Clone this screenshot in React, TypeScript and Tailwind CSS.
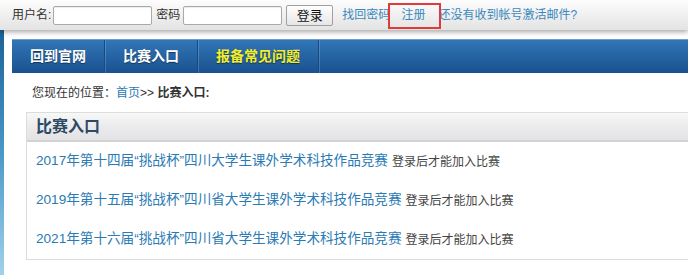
import React from "react"

const rows = [
  "2017年第十四届“挑战杯”四川大学生课外学术科技作品竞赛",
  "2019年第十五届“挑战杯”四川省大学生课外学术科技作品竞赛",
  "2021年第十六届“挑战杯”四川省大学生课外学术科技作品竞赛",
]

const navItems = [
  { label: "回到官网", active: false },
  { label: "比赛入口", active: false },
  { label: "报备常见问题", active: true },
]

export default function App() {
  return (
    <div className="relative w-[688px] h-[275px] overflow-hidden bg-white font-['Liberation_Sans','Noto_Sans_CJK_SC',sans-serif]">
      {/* login bar */}
      <div className="relative z-10 h-[30px] flex items-center pl-[12px] text-[12px] text-[#333] bg-linear-to-b from-[#fdfdfd] to-[#e3e3e3] shadow-[0_2px_5px_rgba(0,0,0,0.35)]">
        <span>用户名:</span>
        <input className="ml-[2px] w-[99px] h-[19px] bg-white border border-[#a9a9a9] rounded-[2px] shadow-[inset_0_1px_1px_rgba(0,0,0,0.08)]" />
        <span className="ml-[4px]">密码</span>
        <input
          type="password"
          className="ml-[3px] w-[99px] h-[19px] bg-white border border-[#a9a9a9] rounded-[2px] shadow-[inset_0_1px_1px_rgba(0,0,0,0.08)]"
        />
        <button className="ml-[4px] w-[47px] h-[21px] text-[13px] text-[#111] border border-[#a0a0a0] rounded-[2px] bg-linear-to-b from-white to-[#e6e6e6]">
          登录
        </button>
        <a className="ml-[9px] text-[#3a89bd]">找回密码</a>
        <a className="ml-[11px] text-[#3a89bd]">注册</a>
        <a className="ml-[13px] text-[#3a89bd]">还没有收到帐号激活邮件?</a>
        <div className="absolute left-[388px] top-[3px] w-[53px] h-[26px] border-2 border-[#e2393b]" />
      </div>

      <div className="flex">
        <div className="w-[4px] h-[245px] shrink-0 bg-linear-to-b from-[#1b6398] via-[#4a98c6] to-[#9ed2ec]" />
        <div className="ml-[8px] w-[1000px] shrink-0 pt-[9px]">
          {/* nav */}
          <div className="h-[34px] flex border-t border-[#6a9fd2] bg-linear-to-b from-[#3176b6] to-[#1a5190]">
            {navItems.map((item) => (
              <div
                key={item.label}
                className="flex items-center px-[18px] border-r border-[#164a82] shadow-[1px_0_0_rgba(255,255,255,0.18)]"
              >
                <span
                  className={`text-[14px] font-bold [text-shadow:0_1px_1px_rgba(0,0,0,0.45)] ${
                    item.active ? "text-[#f2ee2a]" : "text-white"
                  }`}
                >
                  {item.label}
                </span>
              </div>
            ))}
          </div>

          {/* breadcrumb */}
          <div className="h-[39px] flex items-center pl-[20px] text-[12px] text-[#333]">
            <span>您现在的位置：</span>
            <a className="text-[#2a7ab4]">首页</a>
            <span>&gt;&gt;&nbsp;</span>
            <span className="font-bold">比赛入口:</span>
          </div>

          {/* contest list */}
          <div className="ml-[14px] border border-[#dcdcdc]">
            <div className="h-[29px] flex items-center pl-[9px] border-b-2 border-[#d3d3d3] bg-linear-to-b from-[#f8f8f8] via-[#ebebed] to-[#e3e3e5]">
              <span className="text-[16px] font-bold text-[#2c4a64]">比赛入口</span>
            </div>
            {rows.map((title) => (
              <div key={title} className="h-[39px] flex items-center pl-[9px]">
                <a className="text-[13.6px] text-[#2a7ab4]">{title}</a>
                <span className="ml-[4px] text-[12px] text-[#444]">登录后才能加入比赛</span>
              </div>
            ))}
          </div>
        </div>
      </div>
    </div>
  )
}
